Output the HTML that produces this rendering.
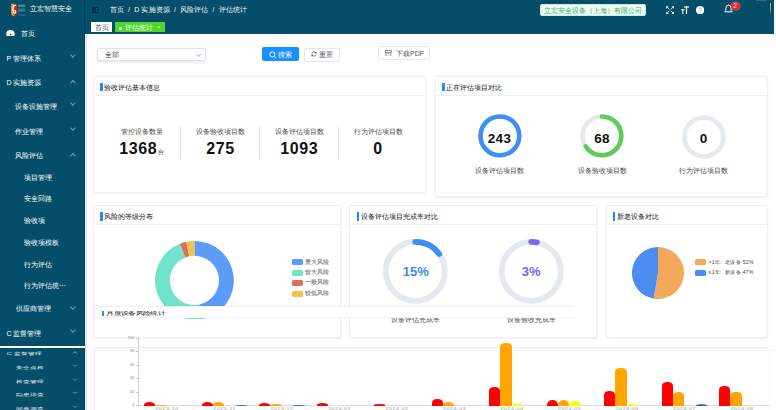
<!DOCTYPE html>
<html><head><meta charset="utf-8">
<style>
*{margin:0;padding:0;box-sizing:border-box}
html,body{width:776px;height:410px;overflow:hidden;background:#fff;font-family:"Liberation Sans",sans-serif;}
.a{position:absolute}
.t{position:absolute;white-space:nowrap;line-height:1}
#side{left:0;top:0;width:85px;height:410px;background:#044e69}
#hdr{left:85px;top:0;width:689px;height:34.2px;background:#044e69}
.mi{color:#fff;font-size:7px;font-weight:500}
.chev{position:absolute;width:3.9px;height:3.9px;border-right:0.7px solid #7d9cae;border-bottom:0.7px solid #7d9cae}
.dn{transform:rotate(45deg)}
.up{transform:rotate(-135deg)}
.card{position:absolute;background:#fff;border:1px solid #eceff5;border-radius:2.5px;box-shadow:0 0.5px 2.5px rgba(0,0,0,0.06)}
.ch{position:absolute;left:0;right:0;top:0;height:19px;border-bottom:1px solid #eef0f6}
.acc{position:absolute;width:2.5px;background:#1890ff}
.tt{position:absolute;white-space:nowrap;line-height:1;font-size:7px;color:#111;font-weight:500}
.sl{font-size:7px;color:#4a4a4a;font-weight:500}
.big{font-size:16px;font-weight:bold;color:#111;letter-spacing:0.6px}
.lg{position:absolute;width:10.7px;height:6px;border-radius:1.5px}
.lt{font-size:5.6px;color:#555}
</style></head>
<body>
<div id="side" class="a"></div>
<div class="a" style="left:83.8px;top:0;width:1.2px;height:410px;background:#033d56"></div>
<svg class="a" style="left:10px;top:2.5px" width="16" height="14" viewBox="0 0 16 14">
<path d="M1.1 0.8 H4.1 V13.6 L2.6 12.6 Q1.1 11.5 1.1 10 Z" fill="#d9a43c"/>
<path d="M4 0.8 H7 V10 Q7 11.8 5.6 12.8 L4 13.7 Z" fill="#d3262b"/>
<path d="M5.8 2.4 C4 2.2 2.6 3.8 3 6.5 C3.3 9 4.2 10.5 5.2 10 C6.2 9.4 5.8 7.2 4.4 7.2" stroke="#fff" stroke-width="1.1" fill="none"/>
<rect x="8" y="1.5" width="7" height="2.6" fill="#6e93a8" opacity="0.75"/>
<rect x="8" y="5.5" width="7" height="3.2" fill="#6e93a8" opacity="0.55"/>
<rect x="8.8" y="11.5" width="6" height="1.2" fill="#6e93a8" opacity="0.45"/>
</svg>
<div class="t mi" style="left:30px;top:5.2px;font-size:7px">立宏智慧安全</div>
<svg class="a" style="left:5.8px;top:29.6px" width="9" height="6.6" viewBox="0 0 9 6.6"><path d="M1 6.3 C-0.2 5 0 1.6 2.2 0.6 C3.6 -0.1 5.4 -0.1 6.8 0.6 C9 1.6 9.2 5 8 6.3 Z" fill="#fff"/><circle cx="4.5" cy="4.6" r="0.8" fill="#2a5f78"/><circle cx="2.3" cy="3.2" r="0.45" fill="#7c9cad"/><circle cx="6.7" cy="3.2" r="0.45" fill="#7c9cad"/><circle cx="4.5" cy="1.6" r="0.45" fill="#7c9cad"/></svg>
<div class="t mi" style="left:20.6px;top:30px">首页</div>
<div class="t mi" style="left:6.4px;top:55.0px">P 管理体系</div>
<div class="chev dn" style="left:70.8px;top:53.1px"></div>
<div class="t mi" style="left:6.4px;top:78.5px">D 实施资源</div>
<div class="chev up" style="left:70.8px;top:80.8px"></div>
<div class="t mi" style="left:15.4px;top:102.9px">设备设施管理</div>
<div class="chev dn" style="left:70.8px;top:101.0px"></div>
<div class="t mi" style="left:15.4px;top:127.80000000000001px">作业管理</div>
<div class="chev dn" style="left:70.8px;top:125.9px"></div>
<div class="t mi" style="left:15.4px;top:151.5px">风险评估</div>
<div class="chev up" style="left:70.8px;top:153.8px"></div>
<div class="t mi" style="left:24.4px;top:173.5px">项目管理</div>
<div class="t mi" style="left:24.4px;top:195.2px">安全回路</div>
<div class="t mi" style="left:24.4px;top:217.0px">验收项</div>
<div class="t mi" style="left:24.4px;top:238.8px">验收项模板</div>
<div class="t mi" style="left:24.4px;top:260.5px">行为评估</div>
<div class="t mi" style="left:24.4px;top:281.6px">行为评估统⋯</div>
<div class="t mi" style="left:16px;top:305.3px">供应商管理</div>
<div class="chev dn" style="left:70.8px;top:304.6px"></div>
<div class="t mi" style="left:6.4px;top:330.1px">C 监督管理</div>
<div class="chev dn" style="left:70.8px;top:328.2px"></div>
<div class="a" style="left:0;top:346.2px;width:87px;height:1.8px;background:#fff"></div>
<div class="t mi" style="left:6.8px;top:350.2px;transform:scaleY(0.6);transform-origin:0 50%">C 监督管理</div>
<div class="chev up" style="left:72.6px;top:351.3px;width:4.2px;height:4.2px;transform:scaleY(0.55) rotate(-135deg)"></div>
<div class="t mi" style="left:16.2px;top:363.8px;transform:scaleY(0.6);transform-origin:0 50%">安全点检</div>
<div class="chev dn" style="left:72.6px;top:363.4px;width:4.2px;height:4.2px;transform:scaleY(0.55) rotate(45deg)"></div>
<div class="t mi" style="left:16.2px;top:377.5px;transform:scaleY(0.6);transform-origin:0 50%">检查管理</div>
<div class="chev dn" style="left:72.6px;top:377.1px;width:4.2px;height:4.2px;transform:scaleY(0.55) rotate(45deg)"></div>
<div class="t mi" style="left:16.2px;top:390.8px;transform:scaleY(0.6);transform-origin:0 50%">隐患排查</div>
<div class="chev dn" style="left:72.6px;top:390.4px;width:4.2px;height:4.2px;transform:scaleY(0.55) rotate(45deg)"></div>
<div class="t mi" style="left:16.2px;top:404.5px;transform:scaleY(0.6);transform-origin:0 50%">问卷调查</div>
<div class="chev dn" style="left:72.6px;top:404.1px;width:4.2px;height:4.2px;transform:scaleY(0.55) rotate(45deg)"></div>
<div id="hdr" class="a"></div>
<svg class="a" style="left:91px;top:5px" width="10" height="9" viewBox="0 0 10 9"><rect x="0" y="0" width="10" height="9" fill="#06587a" opacity="0.5"/><rect x="1" y="1.8" width="6.8" height="1" fill="#031e2b"/><rect x="1" y="2.8" width="3.8" height="4.3" fill="#06324a"/><rect x="1" y="7.1" width="6.8" height="1" fill="#031e2b"/><path d="M6.3 3.9 L8.3 4.95 L6.3 6 Z" fill="#020f17"/></svg>
<div class="t" style="left:109.8px;top:5.5px;font-size:7px;color:#f2f6f8;letter-spacing:0.1px">首页 &nbsp;/&nbsp; D 实施资源 &nbsp;/&nbsp; 风险评估 &nbsp;/&nbsp; 评估统计</div>
<div class="a" style="left:91.3px;top:22px;width:21px;height:9.6px;background:#fff"></div>
<div class="t" style="left:95.2px;top:24px;font-size:7px;color:#555">首页</div>
<div class="a" style="left:115.4px;top:22px;width:50px;height:9.6px;background:#4fd62c"></div>
<div class="a" style="left:119.2px;top:27.2px;width:2.7px;height:2.7px;border-radius:50%;background:#fff"></div>
<div class="t" style="left:125px;top:24.2px;font-size:7px;color:#fff">评估统计</div>
<div class="t" style="left:157.2px;top:25.3px;font-size:5.5px;color:#e8ffe0">×</div>
<div class="a" style="left:539.9px;top:3.9px;width:106.1px;height:12px;background:#f0fbf3;border:0.6px solid #c9efd4;border-radius:1.8px"></div>
<div class="t" style="left:544.3px;top:6.6px;font-size:7px;color:#34b363">立宏安全设备（上海）有限公司</div>
<svg class="a" style="left:666px;top:5.8px" width="8.2" height="8.2" viewBox="0 0 8 8" stroke="#fff" stroke-width="0.85" fill="none" stroke-linecap="round">
<path d="M0.7 1.9 V0.7 H1.9 M0.7 0.7 L3 3"/><path d="M7.3 1.9 V0.7 H6.1 M7.3 0.7 L5 3"/><path d="M0.7 6.1 V7.3 H1.9 M0.7 7.3 L3 5"/><path d="M7.3 6.1 V7.3 H6.1 M7.3 7.3 L5 5"/></svg>
<svg class="a" style="left:681px;top:5.8px" width="8" height="8.2" viewBox="0 0 8 8" fill="#fff">
<rect x="3" y="0.3" width="5" height="1.2"/><rect x="4.9" y="0.3" width="1.2" height="7.7"/><rect x="0" y="3.2" width="3.6" height="1"/><rect x="1.3" y="3.2" width="1" height="4.8"/></svg>
<svg class="a" style="left:695.6px;top:6px" width="8.2" height="8.2" viewBox="0 0 8 8"><circle cx="4" cy="4" r="4" fill="#fff"/><path d="M2.9 3 A1.2 1.2 0 1 1 4.1 4.2 V5" stroke="#9aa8c0" stroke-width="0.8" fill="none"/><circle cx="4.1" cy="6.1" r="0.45" fill="#9aa8c0"/></svg>
<svg class="a" style="left:724px;top:3.8px" width="9" height="9.6" viewBox="0 0 9 9.6" fill="none"><path d="M4.5 0.4 V1.2" stroke="#e8f0f4" stroke-width="0.8"/><path d="M0.7 7.8 H8.3 L7.1 6.4 V4.1 A2.6 2.9 0 0 0 1.9 4.1 V6.4 Z" stroke="#f2f6f8" stroke-width="1"/><path d="M4.5 8.2 V9.3" stroke="#c8d8e0" stroke-width="0.8"/></svg>
<div class="a" style="left:730.6px;top:1.9px;width:9.4px;height:7.9px;border-radius:4px;background:#f5222d;box-shadow:0 0 0 0.6px rgba(255,255,255,0.35)"></div>
<div class="t" style="left:733.2px;top:2.6px;font-size:6.5px;color:#fff">2</div>
<div class="a" style="left:770.1px;top:2.9px;width:0.9px;height:12.2px;background:linear-gradient(#9fbccb,#7fa0b0 60%,#1d3f50);box-shadow:0 0 0 0.5px #02384f"></div><div class="a" style="left:756px;top:0;width:10.8px;height:1px;background:#3e6a7e"></div>
<div class="a" style="left:774px;top:0;width:2px;height:410px;background:#fff"></div>
<div class="a" style="left:85px;top:34.5px;width:2px;height:376px;background:#e6e6e8"></div>
<div class="a" style="left:97.4px;top:48.1px;width:108.5px;height:13.2px;border:0.8px solid #dde1ea;border-radius:2px;box-shadow:0 1.2px 2.5px rgba(0,0,0,0.08)"></div>
<div class="t" style="left:104.7px;top:51px;font-size:7px;color:#3a3a3a">全部</div>
<div class="chev dn" style="left:196.5px;top:52px;width:3.5px;height:3.5px;border-color:#b8bcc6;border-width:0 0.6px 0.6px 0"></div>
<div class="a" style="left:262px;top:47.4px;width:37px;height:13.6px;background:#1890ff;border-radius:2px"></div>
<svg class="a" style="left:269px;top:50.8px" width="7.5" height="7.5" viewBox="0 0 8 8"><circle cx="3.6" cy="3.6" r="2.7" stroke="#fff" stroke-width="1" fill="none"/><path d="M5.6 5.6 L7.4 7.4" stroke="#fff" stroke-width="1"/></svg>
<div class="t" style="left:277.6px;top:51px;font-size:7px;color:#fff">搜索</div>
<div class="a" style="left:303.5px;top:47.5px;width:36px;height:14px;border:0.8px solid #e3e6ee;border-radius:2px;background:#fff"></div>
<svg class="a" style="left:310.5px;top:51.2px" width="6" height="6" viewBox="0 0 6 6" stroke="#666" stroke-width="0.8" fill="none"><path d="M5 2 A2.3 2.3 0 0 0 0.8 2.4"/><path d="M1 4 A2.3 2.3 0 0 0 5.2 3.6"/><path d="M5.2 0.6 V2.2 H3.6"/><path d="M0.8 5.4 V3.8 H2.4"/></svg>
<div class="t" style="left:319px;top:51px;font-size:7px;color:#555">重置</div>
<div class="a" style="left:378.1px;top:46.3px;width:52.3px;height:14px;border:0.8px solid #e3e6ee;border-radius:2px;background:#fff"></div>
<svg class="a" style="left:384.9px;top:49.6px" width="6.8" height="6.8" viewBox="0 0 7 7" stroke="#666" stroke-width="0.7" fill="none"><rect x="0.5" y="0.5" width="6" height="2"/><path d="M1 2.5 V6.5 H6 V2.5"/><path d="M2.5 4 H4.5"/></svg>
<div class="t" style="left:396px;top:49.6px;font-size:7px;color:#555">下载PDF</div>
<div class="card" style="left:92.9px;top:75.8px;width:333.6px;height:117px"><div class="ch"></div></div><div class="acc" style="left:100.2px;top:83.0px;height:8.4px;width:2.6px"></div><div class="tt" style="left:104.1px;top:84.0px">验收评估基本信息</div>
<div class="card" style="left:434.9px;top:75.8px;width:333.3px;height:120.9px"><div class="ch"></div></div><div class="acc" style="left:442.2px;top:83.0px;height:8.4px;width:2.6px"></div><div class="tt" style="left:446.1px;top:84.0px">正在评估项目对比</div>
<div class="card" style="left:92.9px;top:204.6px;width:248.4px;height:133.7px"><div class="ch"></div></div><div class="acc" style="left:100.2px;top:212.2px;height:8.4px;width:2.6px"></div><div class="tt" style="left:104.1px;top:213.2px">风险的等级分布</div>
<div class="card" style="left:349.3px;top:204.6px;width:248px;height:133.7px"><div class="ch"></div></div><div class="acc" style="left:356.6px;top:212.2px;height:8.4px;width:2.6px"></div><div class="tt" style="left:360.5px;top:213.2px">设备评估项目完成率对比</div>
<div class="card" style="left:605.5px;top:204.6px;width:162.7px;height:133.7px"><div class="ch"></div></div><div class="acc" style="left:612.8px;top:212.2px;height:8.4px;width:2.6px"></div><div class="tt" style="left:616.7px;top:213.2px">新老设备对比</div>
<div class="t sl" style="left:112px;width:60px;text-align:center;top:127.9px">管控设备数量</div>
<div class="t sl" style="left:190.5px;width:60px;text-align:center;top:127.9px">设备验收项目数</div>
<div class="t sl" style="left:269.2px;width:60px;text-align:center;top:127.9px">设备评估项目数</div>
<div class="t sl" style="left:348px;width:60px;text-align:center;top:127.9px">行为评估项目数</div>
<div class="a" style="left:180.2px;top:127px;width:0.8px;height:31.8px;background:#dcdcdc"></div>
<div class="a" style="left:259.3px;top:127px;width:0.8px;height:31.8px;background:#dcdcdc"></div>
<div class="a" style="left:337.8px;top:127px;width:0.8px;height:31.8px;background:#dcdcdc"></div>
<div class="t big" style="left:119.2px;top:140.6px">1368</div>
<div class="t" style="left:158.3px;top:149px;font-size:6.3px;color:#333">台</div>
<div class="t big" style="left:190.5px;width:60px;text-align:center;top:140.6px">275</div>
<div class="t big" style="left:269.2px;width:60px;text-align:center;top:140.6px">1093</div>
<div class="t big" style="left:348px;width:60px;text-align:center;top:140.6px">0</div>
<svg class="a" style="left:475.6px;top:112.1px" width="47.8" height="47.8" viewBox="0 0 47.8 47.8"><circle cx="23.9" cy="23.9" r="19.4" stroke="#e4e8f1" stroke-width="4.5" fill="none"/><circle cx="23.9" cy="23.9" r="19.4" stroke="#3d8ef5" stroke-width="4.5" fill="none" stroke-dasharray="121.89379495928397 121.89379495928397" stroke-linecap="butt" transform="rotate(-90 23.9 23.9)"/></svg>
<svg class="a" style="left:578.1px;top:112.1px" width="47.8" height="47.8" viewBox="0 0 47.8 47.8"><circle cx="23.9" cy="23.9" r="19.4" stroke="#e4e8f1" stroke-width="4.5" fill="none"/><circle cx="23.9" cy="23.9" r="19.4" stroke="#5fcb58" stroke-width="4.5" fill="none" stroke-dasharray="79.84 121.89" stroke-linecap="round" transform="rotate(-90 23.9 23.9)"/></svg>
<svg class="a" style="left:679.8000000000001px;top:112.5px" width="47.8" height="47.8" viewBox="0 0 47.8 47.8"><circle cx="23.9" cy="23.9" r="19.4" stroke="#e4e8f1" stroke-width="4.5" fill="none"/></svg>
<div class="t" style="left:474.5px;width:50px;text-align:center;top:132.3px;font-size:13.5px;letter-spacing:0.3px;font-weight:bold;color:#111">243</div>
<div class="t" style="left:577px;width:50px;text-align:center;top:132.3px;font-size:13.5px;letter-spacing:0.3px;font-weight:bold;color:#111">68</div>
<div class="t" style="left:678.7px;width:50px;text-align:center;top:132.3px;font-size:13.5px;letter-spacing:0.3px;font-weight:bold;color:#111">0</div>
<div class="t sl" style="left:469.5px;width:60px;text-align:center;top:167px">设备评估项目数</div>
<div class="t sl" style="left:572px;width:60px;text-align:center;top:167px">设备验收项目数</div>
<div class="t sl" style="left:673.7px;width:60px;text-align:center;top:167px">行为评估项目数</div>
<svg class="a" style="left:155.0px;top:240.70000000000002px" width="78.8" height="78.8" viewBox="-39.4 -39.4 78.8 78.8"><path d="M0.00 -39.40 A39.4 39.4 0 0 1 8.84 38.40 L5.52 23.97 A24.6 24.6 0 0 0 0.00 -24.60 Z" fill="#5a9cf8"/><path d="M8.84 38.40 A39.4 39.4 0 0 1 -14.50 -36.63 L-9.06 -22.87 A24.6 24.6 0 0 0 5.52 23.97 Z" fill="#71e3c8"/><path d="M-14.50 -36.63 A39.4 39.4 0 0 1 -8.11 -38.56 L-5.06 -24.07 A24.6 24.6 0 0 0 -9.06 -22.87 Z" fill="#de6e5c"/><path d="M-8.11 -38.56 A39.4 39.4 0 0 1 0.00 -39.40 L0.00 -24.60 A24.6 24.6 0 0 0 -5.06 -24.07 Z" fill="#f1c24c"/></svg>
<div class="lg" style="left:292.1px;top:259.3px;background:#5a9cf8"></div>
<div class="t lt" style="left:304.8px;top:259.6px">重大风险</div>
<div class="lg" style="left:292.1px;top:269.7px;background:#71e3c8"></div>
<div class="t lt" style="left:304.8px;top:270.0px">较大风险</div>
<div class="lg" style="left:292.1px;top:280.1px;background:#de6e5c"></div>
<div class="t lt" style="left:304.8px;top:280.40000000000003px">一般风险</div>
<div class="lg" style="left:292.1px;top:290.5px;background:#f1c24c"></div>
<div class="t lt" style="left:304.8px;top:290.8px">较低风险</div>
<svg class="a" style="left:380.4px;top:235.89999999999998px" width="70.6" height="70.6" viewBox="0 0 70.6 70.6"><circle cx="35.3" cy="35.3" r="29.5" stroke="#e4e8f1" stroke-width="5.8" fill="none"/><circle cx="35.3" cy="35.3" r="29.5" stroke="#3d8ef5" stroke-width="5.8" fill="none" stroke-dasharray="27.803094984269666 185.3539665617978" stroke-linecap="round" transform="rotate(-90 35.3 35.3)"/></svg>
<svg class="a" style="left:495.90000000000003px;top:235.89999999999998px" width="70.6" height="70.6" viewBox="0 0 70.6 70.6"><circle cx="35.3" cy="35.3" r="29.5" stroke="#e4e8f1" stroke-width="5.8" fill="none"/><circle cx="35.3" cy="35.3" r="29.5" stroke="#7b68ee" stroke-width="5.8" fill="none" stroke-dasharray="5.5606189968539335 185.3539665617978" stroke-linecap="round" transform="rotate(-90 35.3 35.3)"/></svg>
<div class="t" style="left:390.7px;width:50px;text-align:center;top:265.3px;font-size:13px;font-weight:bold;color:#3a8ee6">15%</div>
<div class="t" style="left:506.2px;width:50px;text-align:center;top:265.3px;font-size:13px;font-weight:bold;color:#7b62e8">3%</div>
<div class="t sl" style="left:385.7px;width:60px;text-align:center;top:316px">设备评估完成率</div>
<div class="t sl" style="left:501.2px;width:60px;text-align:center;top:316px">设备验收完成率</div>
<svg class="a" style="left:632.4px;top:246.8px" width="52" height="52" viewBox="-26 -26 52 52"><path d="M0 0 L0.00 -26.00 A26 26 0 1 1 -4.39 25.63 Z" fill="#f2a95b"/><path d="M0 0 L-4.39 25.63 A26 26 0 0 1 -0.00 -26.00 Z" fill="#4a8cf0"/></svg>
<div class="lg" style="left:694.9px;top:259.4px;background:#f2a95b"></div>
<div class="t lt" style="left:708.5px;top:259.9px;font-size:5.3px;color:#444;letter-spacing:0.22px">&gt;1年:&nbsp; 老设备 52%</div>
<div class="lg" style="left:694.9px;top:269.9px;background:#4a8cf0"></div>
<div class="t lt" style="left:708.5px;top:270.4px;font-size:5.3px;color:#444;letter-spacing:0.22px">≤1年:&nbsp; 新设备 47%</div>
<div class="a" style="left:94.3px;top:306.1px;width:480px;height:12.3px;background:#fff;border-top:1px solid #eef0f4;border-bottom:0.8px solid #f1f2f6;border-left:0.6px solid #f0f1f6;box-shadow:0 -0.6px 1.2px rgba(0,0,0,0.035)"></div>
<div class="acc" style="left:101.7px;top:311.3px;height:4.7px;width:2.8px"></div>
<div class="t" style="left:106.3px;top:310.2px;font-size:7.2px;letter-spacing:0.35px;color:#111;font-weight:500;transform:scaleY(0.64);transform-origin:0 50%">月度设备风险统计</div>
<div class="a" style="left:93.5px;top:347.2px;width:675px;height:80px;background:#fff;border:1px solid #e9ebf3;border-right-color:#fbfbfd;border-radius:3px"></div>
<div class="a" style="left:95px;top:350.3px;width:681px;height:0.7px;background:#f3f4f8"></div>
<div class="a" style="left:137.7px;top:337.8px;width:0.7px;height:67.6px;background:#d2d2d2"></div>
<div class="a" style="left:137.7px;top:405.2px;width:633px;height:0.8px;background:#dcdcdc"></div>
<div class="t" style="left:110px;width:24.5px;text-align:right;top:335.8px;font-size:4px;color:#888">100</div>
<div class="a" style="left:135.5px;top:337.8px;width:2.2px;height:0.6px;background:#c8c8c8"></div>
<div class="t" style="left:110px;width:24.5px;text-align:right;top:349.32px;font-size:4px;color:#888">80</div>
<div class="a" style="left:135.5px;top:351.32px;width:2.2px;height:0.6px;background:#c8c8c8"></div>
<div class="t" style="left:110px;width:24.5px;text-align:right;top:362.84000000000003px;font-size:4px;color:#888">60</div>
<div class="a" style="left:135.5px;top:364.84000000000003px;width:2.2px;height:0.6px;background:#c8c8c8"></div>
<div class="t" style="left:110px;width:24.5px;text-align:right;top:376.36px;font-size:4px;color:#888">40</div>
<div class="a" style="left:135.5px;top:378.36px;width:2.2px;height:0.6px;background:#c8c8c8"></div>
<div class="t" style="left:110px;width:24.5px;text-align:right;top:389.88px;font-size:4px;color:#888">20</div>
<div class="a" style="left:135.5px;top:391.88px;width:2.2px;height:0.6px;background:#c8c8c8"></div>
<div class="t" style="left:110px;width:24.5px;text-align:right;top:403.4px;font-size:4px;color:#888">0</div>
<div class="a" style="left:135.5px;top:405.4px;width:2.2px;height:0.6px;background:#c8c8c8"></div>
<div class="a" style="left:144.0px;top:402.3px;width:11.4px;height:3.3px;background:#ff0000;border-radius:5.7px 5.7px 0 0/2.8999999999999773px 2.8999999999999773px 0 0"></div>
<div class="a" style="left:155.4px;top:404.6px;width:11.4px;height:1.0px;background:#ffa500;border-radius:5.7px 5.7px 0 0/0.5999999999999659px 0.5999999999999659px 0 0"></div>
<div class="a" style="left:201.5px;top:401.6px;width:11.4px;height:4.0px;background:#ff0000;border-radius:5.7px 5.7px 0 0/3.599999999999966px 3.599999999999966px 0 0"></div>
<div class="a" style="left:212.9px;top:402.2px;width:11.4px;height:3.4px;background:#ffa500;border-radius:5.7px 5.7px 0 0/3.0px 3.0px 0 0"></div>
<div class="a" style="left:235.7px;top:404.6px;width:11.4px;height:1.0px;background:#2a6fc0;border-radius:5.7px 5.7px 0 0/0.5999999999999659px 0.5999999999999659px 0 0"></div>
<div class="a" style="left:259.0px;top:402.9px;width:11.4px;height:2.7px;background:#ff0000;border-radius:5.7px 5.7px 0 0/2.3000000000000114px 2.3000000000000114px 0 0"></div>
<div class="a" style="left:270.4px;top:403.8px;width:11.4px;height:1.8px;background:#ffa500;border-radius:5.7px 5.7px 0 0/1.3999999999999773px 1.3999999999999773px 0 0"></div>
<div class="a" style="left:293.2px;top:404.6px;width:11.4px;height:1.0px;background:#2a6fc0;border-radius:5.7px 5.7px 0 0/0.5999999999999659px 0.5999999999999659px 0 0"></div>
<div class="a" style="left:316.5px;top:403.0px;width:11.4px;height:2.6px;background:#ff0000;border-radius:5.7px 5.7px 0 0/2.1999999999999886px 2.1999999999999886px 0 0"></div>
<div class="a" style="left:374.0px;top:404.4px;width:11.4px;height:1.2px;background:#ff0000;border-radius:5.7px 5.7px 0 0/0.8000000000000114px 0.8000000000000114px 0 0"></div>
<div class="a" style="left:431.5px;top:398.7px;width:11.4px;height:6.9px;background:#ff0000;border-radius:5px 5px 0 0/3.8px 3.8px 0 0"></div>
<div class="a" style="left:442.9px;top:401.8px;width:11.4px;height:3.8px;background:#ffa500;border-radius:5.7px 5.7px 0 0/3.3999999999999773px 3.3999999999999773px 0 0"></div>
<div class="a" style="left:489.0px;top:387.0px;width:11.4px;height:18.6px;background:#ff0000;border-radius:5px 5px 0 0/3.8px 3.8px 0 0"></div>
<div class="a" style="left:500.4px;top:342.7px;width:11.4px;height:62.9px;background:#ffa500;border-radius:5px 5px 0 0/3.8px 3.8px 0 0"></div>
<div class="a" style="left:511.8px;top:404.2px;width:11.4px;height:1.4px;background:#ffff00;border-radius:5.7px 5.7px 0 0/1.0px 1.0px 0 0"></div>
<div class="a" style="left:546.5px;top:400.2px;width:11.4px;height:5.4px;background:#ff0000;border-radius:5.7px 5.7px 0 0/5.0px 5.0px 0 0"></div>
<div class="a" style="left:557.9px;top:400.2px;width:11.4px;height:5.4px;background:#ffa500;border-radius:5.7px 5.7px 0 0/5.0px 5.0px 0 0"></div>
<div class="a" style="left:569.3px;top:401.0px;width:11.4px;height:4.6px;background:#ffff00;border-radius:5.7px 5.7px 0 0/4.199999999999989px 4.199999999999989px 0 0"></div>
<div class="a" style="left:604.0px;top:391.0px;width:11.4px;height:14.6px;background:#ff0000;border-radius:5px 5px 0 0/3.8px 3.8px 0 0"></div>
<div class="a" style="left:615.4px;top:367.8px;width:11.4px;height:37.8px;background:#ffa500;border-radius:5px 5px 0 0/3.8px 3.8px 0 0"></div>
<div class="a" style="left:626.8px;top:403.5px;width:11.4px;height:2.1px;background:#ffff00;border-radius:5.7px 5.7px 0 0/1.6999999999999886px 1.6999999999999886px 0 0"></div>
<div class="a" style="left:661.5px;top:382.0px;width:11.4px;height:23.6px;background:#ff0000;border-radius:5px 5px 0 0/3.8px 3.8px 0 0"></div>
<div class="a" style="left:672.9px;top:392.0px;width:11.4px;height:13.6px;background:#ffa500;border-radius:5px 5px 0 0/3.8px 3.8px 0 0"></div>
<div class="a" style="left:695.7px;top:403.5px;width:11.4px;height:2.1px;background:#2a6fc0;border-radius:5.7px 5.7px 0 0/1.6999999999999886px 1.6999999999999886px 0 0"></div>
<div class="a" style="left:719.0px;top:386.0px;width:11.4px;height:19.6px;background:#ff0000;border-radius:5px 5px 0 0/3.8px 3.8px 0 0"></div>
<div class="a" style="left:730.4px;top:391.5px;width:11.4px;height:14.1px;background:#ffa500;border-radius:5px 5px 0 0/3.8px 3.8px 0 0"></div>
<div class="t" style="left:152.0px;width:30px;text-align:center;top:408.1px;font-size:5.6px;letter-spacing:0.35px;color:#a0a0a0;transform:scaleY(0.6);transform-origin:50% 0">2023-10</div>
<div class="t" style="left:209.5px;width:30px;text-align:center;top:408.1px;font-size:5.6px;letter-spacing:0.35px;color:#a0a0a0;transform:scaleY(0.6);transform-origin:50% 0">2023-11</div>
<div class="t" style="left:267.0px;width:30px;text-align:center;top:408.1px;font-size:5.6px;letter-spacing:0.35px;color:#a0a0a0;transform:scaleY(0.6);transform-origin:50% 0">2023-12</div>
<div class="t" style="left:324.5px;width:30px;text-align:center;top:408.1px;font-size:5.6px;letter-spacing:0.35px;color:#a0a0a0;transform:scaleY(0.6);transform-origin:50% 0">2024-01</div>
<div class="t" style="left:382.0px;width:30px;text-align:center;top:408.1px;font-size:5.6px;letter-spacing:0.35px;color:#a0a0a0;transform:scaleY(0.6);transform-origin:50% 0">2024-02</div>
<div class="t" style="left:439.5px;width:30px;text-align:center;top:408.1px;font-size:5.6px;letter-spacing:0.35px;color:#a0a0a0;transform:scaleY(0.6);transform-origin:50% 0">2024-03</div>
<div class="t" style="left:497.0px;width:30px;text-align:center;top:408.1px;font-size:5.6px;letter-spacing:0.35px;color:#a0a0a0;transform:scaleY(0.6);transform-origin:50% 0">2024-04</div>
<div class="t" style="left:554.5px;width:30px;text-align:center;top:408.1px;font-size:5.6px;letter-spacing:0.35px;color:#a0a0a0;transform:scaleY(0.6);transform-origin:50% 0">2024-05</div>
<div class="t" style="left:612.0px;width:30px;text-align:center;top:408.1px;font-size:5.6px;letter-spacing:0.35px;color:#a0a0a0;transform:scaleY(0.6);transform-origin:50% 0">2024-06</div>
<div class="t" style="left:669.5px;width:30px;text-align:center;top:408.1px;font-size:5.6px;letter-spacing:0.35px;color:#a0a0a0;transform:scaleY(0.6);transform-origin:50% 0">2024-07</div>
<div class="t" style="left:727.0px;width:30px;text-align:center;top:408.1px;font-size:5.6px;letter-spacing:0.35px;color:#a0a0a0;transform:scaleY(0.6);transform-origin:50% 0">2024-08</div>
</body></html>
